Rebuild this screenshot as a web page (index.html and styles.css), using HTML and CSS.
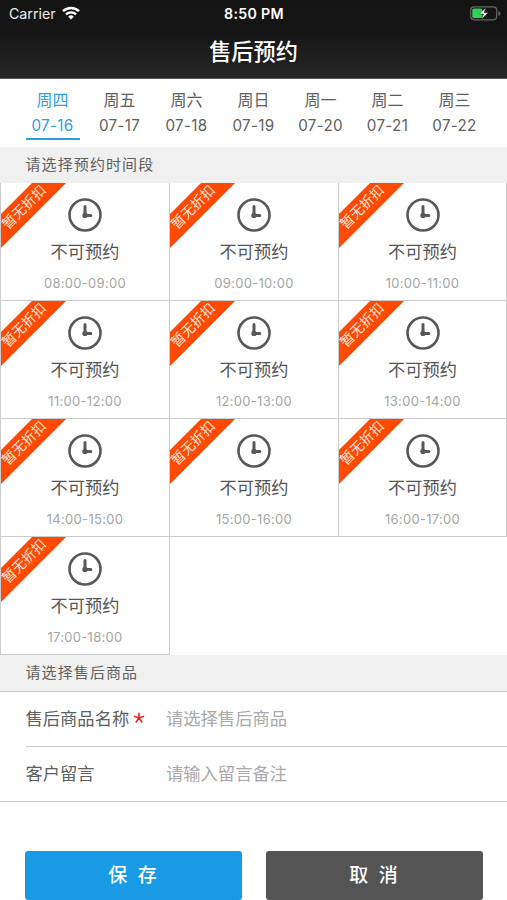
FILE: index.html
```html
<!DOCTYPE html>
<html lang="zh-CN">
<head>
<meta charset="utf-8">
<title>售后预约</title>
<link rel="stylesheet" href="styles.css">
</head>
<body>
<svg width="0" height="0" class="defs"><symbol id="clock" viewBox="0 0 34 34"><circle cx="17" cy="17" r="15.5" fill="none" stroke="#585858" stroke-width="2.6"/><path d="M17 8.5V17.4H22.8" fill="none" stroke="#585858" stroke-width="3" stroke-linecap="round" stroke-linejoin="round"/><circle cx="17" cy="17.4" r="2.7" fill="#585858"/></symbol></svg>
<header class="header">
  <div class="status">
    <div class="carrier"><span>Carrier</span><svg class="wifi" width="18" height="14" viewBox="0 0 18 14"><path d="M1 5.2a11.3 11.3 0 0 1 16 0" fill="none" stroke="#fff" stroke-width="2.5"/><path d="M4 8.4a7.1 7.1 0 0 1 10 0" fill="none" stroke="#fff" stroke-width="2.3"/><path d="M9 13.6l-2.8-2.9a4 4 0 0 1 5.6 0z" fill="#fff"/></svg></div>
    <div class="clock-time">8:50 PM</div>
    <svg class="battery" width="31" height="15" viewBox="0 0 31 15"><rect x=".7" y=".8" width="26" height="13" rx="3.5" fill="none" stroke="#666" stroke-width="1.2"/><path d="M28.5 5v5q2-.8 2-2.500T28.500 5z" fill="#666"/><rect x="2.300" y="2.500" width="10" height="9.600" rx="1.500" fill="#30d158"/><path d="M15.800 1.700L9.500 8h4l-2 5.300L18 6.800h-4z" fill="#fff" stroke="#181818" stroke-width=".4"/></svg>
  </div>
  <h1 class="title">售后预约</h1>
</header>
<nav class="days">
  <a class="day active"><span>周四</span><span class="date">07-16</span></a>
  <a class="day"><span>周五</span><span class="date">07-17</span></a>
  <a class="day"><span>周六</span><span class="date">07-18</span></a>
  <a class="day"><span>周日</span><span class="date">07-19</span></a>
  <a class="day"><span>周一</span><span class="date">07-20</span></a>
  <a class="day"><span>周二</span><span class="date">07-21</span></a>
  <a class="day"><span>周三</span><span class="date">07-22</span></a>
</nav>
<h2 class="section">请选择预约时间段</h2>
<main class="slots">
  <div class="slot"><div class="ribbon"><span>暂无折扣</span></div><svg class="icon"><use href="#clock"/></svg><span class="state">不可预约</span><span class="time">08:00-09:00</span></div>
  <div class="slot"><div class="ribbon"><span>暂无折扣</span></div><svg class="icon"><use href="#clock"/></svg><span class="state">不可预约</span><span class="time">09:00-10:00</span></div>
  <div class="slot"><div class="ribbon"><span>暂无折扣</span></div><svg class="icon"><use href="#clock"/></svg><span class="state">不可预约</span><span class="time">10:00-11:00</span></div>
  <div class="slot"><div class="ribbon"><span>暂无折扣</span></div><svg class="icon"><use href="#clock"/></svg><span class="state">不可预约</span><span class="time">11:00-12:00</span></div>
  <div class="slot"><div class="ribbon"><span>暂无折扣</span></div><svg class="icon"><use href="#clock"/></svg><span class="state">不可预约</span><span class="time">12:00-13:00</span></div>
  <div class="slot"><div class="ribbon"><span>暂无折扣</span></div><svg class="icon"><use href="#clock"/></svg><span class="state">不可预约</span><span class="time">13:00-14:00</span></div>
  <div class="slot"><div class="ribbon"><span>暂无折扣</span></div><svg class="icon"><use href="#clock"/></svg><span class="state">不可预约</span><span class="time">14:00-15:00</span></div>
  <div class="slot"><div class="ribbon"><span>暂无折扣</span></div><svg class="icon"><use href="#clock"/></svg><span class="state">不可预约</span><span class="time">15:00-16:00</span></div>
  <div class="slot"><div class="ribbon"><span>暂无折扣</span></div><svg class="icon"><use href="#clock"/></svg><span class="state">不可预约</span><span class="time">16:00-17:00</span></div>
  <div class="slot"><div class="ribbon"><span>暂无折扣</span></div><svg class="icon"><use href="#clock"/></svg><span class="state">不可预约</span><span class="time">17:00-18:00</span></div>
</main>
<h2 class="section goods">请选择售后商品</h2>
<section class="form">
  <div class="field"><span class="label">售后商品名称<svg class="required" width="12" height="12" viewBox="0 0 12 12"><path d="M6 6V.7M6 6L1 4.300M6 6l5-1.700M6 6l-3.200 4.500M6 6l3.200 4.500" stroke="#f5221b" stroke-width="1.600" fill="none"/></svg></span><span class="hint">请选择售后商品</span></div>
  <div class="field"><span class="label">客户留言</span><span class="hint">请输入留言备注</span></div>
</section>
<footer class="actions">
  <button class="btn save">保 存</button>
  <button class="btn cancel">取 消</button>
</footer>
</body>
</html>
```
FILE: styles.css
```css
* { box-sizing: border-box; }
body {
  margin: 0;
  width: 507px;
  height: 900px;
  overflow: hidden;
  background: #fff;
  color: #606060;
  font-family: Inter, "Noto Sans CJK SC", sans-serif;
}
.defs { position: absolute; }
.header {
  height: 79px;
  background: linear-gradient(#141414 0, #151515 30px, #262626 100%);
  color: #fff;
  border-bottom: 1px solid #555;
}
.status {
  display: grid;
  grid-template-columns: 1fr auto 1fr;
  align-items: center;
  height: 27px;
  padding: 0 6px 0 9px;
}
.carrier {
  display: flex;
  align-items: center;
  gap: 6px;
  font-size: 14.2px;
  color: #eee;
}
.wifi { margin-top: -2px; }
.clock-time {
  margin-right: 2px;
  font-size: 14.2px;
  font-weight: 600;
  letter-spacing: 0.3px;
}
.battery { justify-self: end; }
.title {
  margin: 0;
  font-size: 22.2px;
  font-weight: 500;
  line-height: 50px;
  text-align: center;
}
.days {
  display: flex;
  height: 68px;
  padding: 8px 19px 0;
}
.day {
  display: flex;
  flex-direction: column;
  align-items: center;
  width: 67px;
  font-size: 16px;
  line-height: 26px;
}
.date {
  width: 54px;
  height: 27px;
  text-align: center;
  font-size: 15.2px;
  letter-spacing: 0.3px;
  white-space: nowrap;
}
.active { color: #2f9fe0; }
.active .date { border-bottom: 2px solid #2f9fe0; }
.section {
  margin: 0;
  height: 36px;
  padding-left: 25.5px;
  background: #f0f0f0;
  font-size: 15px;
  font-weight: 400;
  line-height: 35px;
  letter-spacing: 1.1px;
}
.slots {
  display: grid;
  grid-template-columns: 170px 169px 168px;
  grid-auto-rows: 118px;
  height: 472px;
}
.slot {
  position: relative;
  display: flex;
  flex-direction: column;
  align-items: center;
  padding-top: 15px;
  border: solid #ccc;
  border-width: 0 1px 1px 0;
}
.slot:nth-child(3n + 1) { border-left-width: 1px; }
.icon { width: 34px; height: 34px; }
.state {
  margin-top: 6px;
  font-size: 17.2px;
  line-height: 28px;
  color: #555;
}
.time {
  margin-top: 8px;
  font-size: 13px;
  line-height: 18px;
  letter-spacing: 0.3px;
  color: #a5a5a5;
}
.ribbon {
  position: absolute;
  left: 0;
  top: 0;
  width: 65px;
  height: 65px;
  background: #ff4a05;
  clip-path: polygon(31px 0, 65px 0, 0 65px, 0 31px);
}
.ribbon span {
  position: absolute;
  left: -7px;
  top: 14px;
  width: 60px;
  text-align: center;
  color: #ffe9dc;
  font-size: 13.8px;
  line-height: 20px;
  white-space: nowrap;
  transform: rotate(-45deg);
}
.goods { height: 37px; border-bottom: 1px solid #ccc; }
.form { border-bottom: 1px solid #ccc; }
.field {
  display: flex;
  align-items: center;
  height: 54px;
  padding-bottom: 3px;
  margin-left: 25.5px;
  font-size: 17.3px;
}
.field + .field { border-top: 1px solid #ccc; height: 55px; }
.label { display: flex; align-items: center; width: 140.5px; }
.required { margin-left: 4px; }
.hint { color: #a9a9a9; }
.actions { display: flex; gap: 24px; padding: 48.5px 24px 0 25px; }
.btn {
  flex: 1;
  height: 49px;
  padding: 0 2px 0 0;
  border: 0;
  border-radius: 3px;
  color: #fff;
  font: 500 19px/49px Inter, "Noto Sans CJK SC", sans-serif;
  word-spacing: 5.5px;
}
.save { background: #189ae4; }
.cancel { background: #545454; }
```
